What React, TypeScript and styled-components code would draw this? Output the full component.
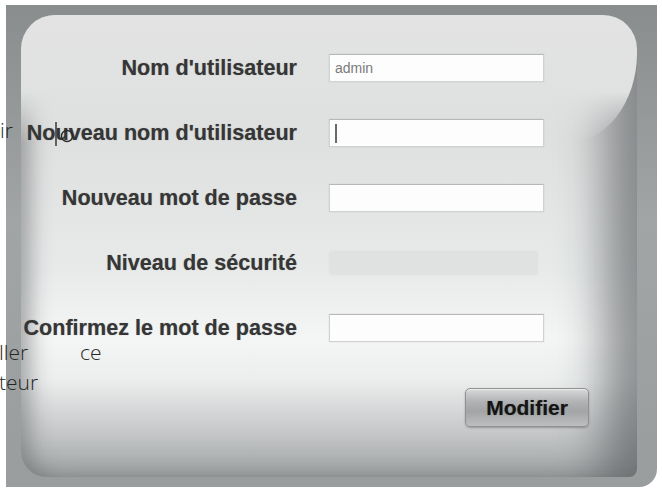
import { Fragment as ReactFragment } from "react";
import { createGlobalStyle, styled } from "styled-components";

const GlobalStyle = createGlobalStyle`
  html, body {
    margin: 0;
    padding: 0;
    background: #ffffff;
    overflow: hidden;
  }
  * {
    box-sizing: border-box;
  }
`;

const Page = styled.div`
  position: relative;
  width: 662px;
  height: 489px;
  padding: 5px 0 0 6px;
`;

const Frame = styled.div`
  width: 651px;
  height: 482px;
  padding: 10px 20px 10px 15px;
  background: linear-gradient(180deg, #8a8d8e 0%, #a2a5a6 45%, #9a9d9e 100%);
  border-radius: 0 0 18px 0;
`;

const Panel = styled.div`
  position: relative;
  height: 100%;
  border-radius: 34px 34px 8px 26px;
  background: linear-gradient(
    180deg,
    #d8d9d9 0%,
    #dfe0e0 28%,
    #e8eaea 55%,
    #f4f5f5 70%,
    #eceeee 79%,
    #c6c8c9 90%,
    #a3a6a7 100%
  );
  box-shadow: inset 16px 0 20px -6px rgba(95, 98, 100, 0.5),
    inset -50px 0 44px -16px rgba(82, 86, 88, 0.62);

  &::before {
    content: "";
    position: absolute;
    top: 0;
    left: 0;
    right: 0;
    height: 128px;
    border-radius: 34px 34px 70px 0 / 34px 34px 90px 0;
    background: linear-gradient(180deg, #e3e3e3 0%, #e0e1e1 60%, rgba(224, 225, 225, 0) 100%);
    pointer-events: none;
  }
`;

const Form = styled.div`
  position: relative;
  display: grid;
  grid-template-columns: 276px 215px;
  grid-auto-rows: 28px;
  column-gap: 32px;
  row-gap: 37px;
  padding-top: 39px;
`;

const Label = styled.div`
  justify-self: end;
  align-self: center;
  white-space: nowrap;
  font-family: "Liberation Sans", Arial, sans-serif;
  font-weight: 700;
  font-size: 21.6px;
  line-height: 24px;
  color: #363636;
  text-shadow: 0 0 1px rgba(40, 40, 40, 0.4);
`;

const Field = styled.div`
  display: flex;
  align-items: center;
  height: 28px;
  padding: 0 5px;
  background: #fdfdfd;
  border: 1px solid #d0d1d1;
  border-top-color: #b6b7b7;
  box-shadow: 0 0 1px rgba(120, 120, 120, 0.3);
  font-family: "Liberation Sans", Arial, sans-serif;
  font-size: 14px;
  color: #7a7a7a;
`;

const Caret = styled.span`
  display: block;
  width: 2px;
  height: 19px;
  background: #6a6a6a;
`;

const StrengthBar = styled.div`
  align-self: center;
  width: 207px;
  height: 22px;
  margin-left: 1px;
  background: #e0e1e1;
  box-shadow: 0 0 2px rgba(200, 200, 200, 0.6);
`;

const ButtonRow = styled.div`
  position: relative;
  display: flex;
  justify-content: flex-end;
  padding: 46px 48px 0 0;
`;

const Button = styled.button`
  width: 124px;
  height: 39px;
  border: 1px solid #8f9192;
  border-radius: 5px;
  background: linear-gradient(
    180deg,
    #d8d9d9 0%,
    #b0b2b3 35%,
    #a2a4a5 60%,
    #bcbebf 100%
  );
  box-shadow: 0 1px 2px rgba(0, 0, 0, 0.25), inset 0 1px 0 rgba(255, 255, 255, 0.5);
  font-family: "Liberation Sans", Arial, sans-serif;
  font-weight: 700;
  font-size: 21px;
  color: #151515;
  text-shadow: 0 0 1px rgba(0, 0, 0, 0.4);
  cursor: pointer;
`;

// stray caption fragments lying over the left edge of the screenshot
const Fragment = styled.span<{ $top: number; $left: number }>`
  position: absolute;
  top: ${(p) => p.$top}px;
  left: ${(p) => p.$left}px;
  font-family: "Open Sans", "DejaVu Sans", sans-serif;
  font-weight: 300;
  font-size: 21px;
  line-height: 1;
  color: #262626;
  white-space: nowrap;
`;

const Pointer = styled.svg`
  position: absolute;
  top: 122px;
  left: 54px;
`;

const rows = [
  { label: "Nom d'utilisateur", value: "admin" },
  { label: "Nouveau nom d'utilisateur", caret: true },
  { label: "Nouveau mot de passe" },
  { label: "Niveau de sécurité", bar: true },
  { label: "Confirmez le mot de passe" },
];

export default function App() {
  return (
    <>
      <GlobalStyle />
      <Page>
        <Frame>
          <Panel>
            <Form>
              {rows.map((row) => (
                <ReactFragment key={row.label}>
                  <Label>{row.label}</Label>
                  {row.bar ? (
                    <StrengthBar />
                  ) : (
                    <Field>
                      {row.value}
                      {row.caret && <Caret />}
                    </Field>
                  )}
                </ReactFragment>
              ))}
            </Form>
            <ButtonRow>
              <Button>Modifier</Button>
            </ButtonRow>
          </Panel>
        </Frame>
        <Fragment $top={120} $left={0}>ir</Fragment>
        <Fragment $top={342} $left={-1}>ller</Fragment>
        <Fragment $top={342} $left={80}>ce</Fragment>
        <Fragment $top={372} $left={-1}>teur</Fragment>
        <Pointer width="24" height="26" viewBox="0 0 24 26">
          <line x1="2" y1="0" x2="2" y2="24" stroke="#2a2a2a" strokeWidth="1.4" />
          <circle cx="13" cy="14" r="5.5" fill="none" stroke="#2a2a2a" strokeWidth="1.4" />
        </Pointer>
      </Page>
    </>
  );
}
